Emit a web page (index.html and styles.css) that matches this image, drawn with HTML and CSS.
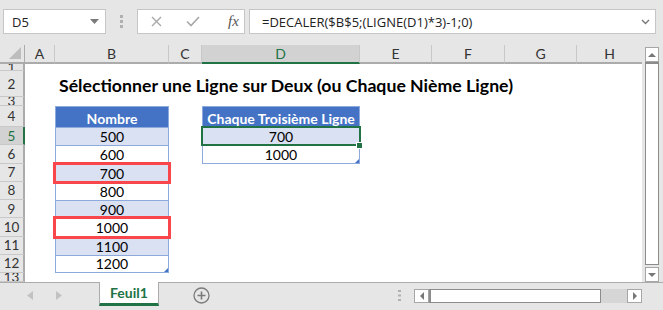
FILE: index.html
```html
<!DOCTYPE html>
<html lang="fr">
<head>
    <meta charset="UTF-8">
    <title>Feuil1 - Excel</title>
    <link rel="stylesheet" href="styles.css">
</head>
<body>
    <div class="formula-bar">
        <div class="name-box">
            <span>D5</span>
            <svg width="9" height="5" viewBox="0 0 9 5"><path d="M0 0h9L4.5 5z" fill="#7a7a7a"/></svg>
        </div>
        <div class="bar-dots">
            <svg width="3" height="13" viewBox="0 0 3 13"><rect x="0" y="0" width="3" height="3" fill="#b0b0b0"/><rect x="0" y="5" width="3" height="3" fill="#b0b0b0"/><rect x="0" y="10" width="3" height="3" fill="#b0b0b0"/></svg>
        </div>
        <div class="fx-box">
            <svg class="fx-icon" width="11" height="11" viewBox="0 0 11 11"><path d="M1 1l9 9M10 1l-9 9" stroke="#a8a8a8" stroke-width="1.4"/></svg>
            <svg class="fx-icon" width="14" height="11" viewBox="0 0 14 11"><path d="M1 5.5l4 4L13 1" stroke="#a8a8a8" stroke-width="1.6" fill="none"/></svg>
            <span class="fx">fx</span>
        </div>
        <div class="formula-input">
            <span>=DECALER($B$5;(LIGNE(D1)*3)-1;0)</span>
            <svg width="9" height="6" viewBox="0 0 9 6"><path d="M1 1l3.5 3.5L8 1" stroke="#777" stroke-width="1.4" fill="none"/></svg>
        </div>
    </div>

    <div class="sheet-area">
        <div class="sheet">
            <div class="ch corner">
                <svg width="12" height="12" viewBox="0 0 12 12"><path d="M12 0v12H0z" fill="#bdbdbd"/></svg>
            </div>
            <div class="ch">A</div>
            <div class="ch">B</div>
            <div class="ch">C</div>
            <div class="ch sel">D</div>
            <div class="ch">E</div>
            <div class="ch">F</div>
            <div class="ch">G</div>
            <div class="ch last">H</div>

            <div class="rh">1</div>
            <div class="rh">2</div>
            <div class="rh">3</div>
            <div class="rh">4</div>
            <div class="rh sel">5</div>
            <div class="rh">6</div>
            <div class="rh">7</div>
            <div class="rh">8</div>
            <div class="rh">9</div>
            <div class="rh">10</div>
            <div class="rh">11</div>
            <div class="rh">12</div>
            <div class="rh">13</div>

            <div class="title">Sélectionner une Ligne sur Deux (ou Chaque Nième Ligne)</div>

            <div class="cell head col-b row-4">Nombre</div>
            <div class="cell band col-b row-5">500</div>
            <div class="cell col-b row-6">600</div>
            <div class="cell band marked col-b row-7">700</div>
            <div class="cell col-b row-8">800</div>
            <div class="cell band col-b row-9">900</div>
            <div class="cell marked col-b row-10">1000</div>
            <div class="cell band col-b row-11">1100</div>
            <div class="cell table-end col-b row-12">1200</div>

            <div class="cell head col-d row-4">Chaque Troisième Ligne</div>
            <div class="cell band active col-d row-5">700</div>
            <div class="cell table-end col-d row-6">1000</div>
        </div>

        <div class="vscroll">
            <div class="sbtn"><svg width="8" height="4" viewBox="0 0 8 4"><path d="M0 4h8L4 0z" fill="#777"/></svg></div>
            <div class="vthumb"></div>
            <div class="sbtn"><svg width="8" height="4" viewBox="0 0 8 4"><path d="M0 0h8L4 4z" fill="#777"/></svg></div>
        </div>
    </div>

    <div class="tab-bar">
        <div class="tab-nav">
            <svg width="6" height="9" viewBox="0 0 6 9"><path d="M6 0v9L0 4.5z" fill="#c2c2c2"/></svg>
            <svg width="6" height="9" viewBox="0 0 6 9"><path d="M0 0v9l6-4.5z" fill="#c2c2c2"/></svg>
        </div>
        <div class="sheet-tab">Feuil1</div>
        <div class="add-sheet">
            <svg width="17" height="17" viewBox="0 0 17 17"><circle cx="8.5" cy="8.5" r="7.5" stroke="#7a7a7a" stroke-width="1.3" fill="none"/><path d="M8.5 4.5v8M4.5 8.5h8" stroke="#7a7a7a" stroke-width="1.6"/></svg>
        </div>
        <div class="tab-dots">
            <svg width="3" height="11" viewBox="0 0 3 11"><rect x="0" y="0" width="3" height="2" fill="#b0b0b0"/><rect x="0" y="4.5" width="3" height="2" fill="#b0b0b0"/><rect x="0" y="9" width="3" height="2" fill="#b0b0b0"/></svg>
        </div>
        <div class="hscroll">
            <div class="sbtn"><svg width="4" height="8" viewBox="0 0 4 8"><path d="M4 0v8L0 4z" fill="#777"/></svg></div>
            <div class="hthumb"></div>
            <div class="htrack"></div>
            <div class="sbtn"><svg width="4" height="8" viewBox="0 0 4 8"><path d="M0 0v8l4-4z" fill="#777"/></svg></div>
        </div>
    </div>
</body>
</html>
```

FILE: styles.css
```css
body {
    margin: 0;
    width: 663px;
    height: 310px;
    overflow: hidden;
    background-color: #e6e6e6;
    font-family: Lato, "Open Sans", sans-serif;
    color: #000;
}

/* formula bar */

.formula-bar {
    height: 38px;
    box-sizing: border-box;
    padding: 9px 0 0 3px;
    display: flex;
    align-items: flex-start;
}

.name-box {
    width: 103px;
    height: 25px;
    box-sizing: border-box;
    background-color: #fff;
    border: 1px solid #c6c6c6;
    display: flex;
    align-items: center;
    justify-content: space-between;
    padding: 0 6px 0 8px;
    font-family: "Open Sans", sans-serif;
    font-size: 13px;
    color: #222;
}

.bar-dots {
    width: 31px;
    height: 25px;
    display: flex;
    align-items: center;
    justify-content: center;
}

.fx-box {
    width: 108px;
    height: 25px;
    box-sizing: border-box;
    background-color: #fff;
    border: 1px solid #c6c6c6;
    display: flex;
    align-items: center;
    padding-left: 13px;
}

.fx-icon {
    margin-right: 24px;
}

.fx {
    margin-left: 4px;
    font-family: "Liberation Serif", serif;
    font-style: italic;
    font-size: 15px;
    color: #555;
}

.formula-input {
    width: 407px;
    height: 25px;
    margin-left: 4px;
    box-sizing: border-box;
    background-color: #fff;
    border: 1px solid #c6c6c6;
    display: flex;
    align-items: center;
    justify-content: space-between;
    padding: 0 5px 0 12px;
    font-family: "Open Sans", sans-serif;
    font-size: 13px;
    color: #222;
}

/* sheet */

.sheet-area {
    height: 244px;
    box-sizing: border-box;
    padding-top: 7px;
    display: flex;
    align-items: flex-start;
}

.sheet {
    width: 642px;
    height: 237px;
    overflow: hidden;
    background-color: #fff;
    display: grid;
    grid-template-columns: 25px 30px 114px 33px 158px 72px 73px 72px 65px;
    grid-template-rows: 19px 7px 26px 9px 21px repeat(8, 18.25px) 9px;
    font-size: 14px;
}

.ch {
    grid-row: 1;
    box-sizing: border-box;
    background-color: #e6e6e6;
    border-right: 1px solid #c8c8c8;
    border-bottom: 2px solid #ababab;
    display: flex;
    align-items: center;
    justify-content: center;
    color: #333;
    font-size: 14px;
}

.ch.corner {
    justify-content: flex-end;
    align-items: flex-end;
    padding: 0 3px 3px 0;
    border-right: 1px solid #ababab;
}

.ch.last {
    border-right: none;
}

.ch.sel {
    background-color: #d2d2d2;
    border-bottom-color: #217346;
    color: #217346;
}

.rh {
    grid-column: 1;
    box-sizing: border-box;
    background-color: #e6e6e6;
    border-right: 2px solid #ababab;
    border-bottom: 1px solid #c8c8c8;
    overflow: hidden;
    display: flex;
    align-items: center;
    justify-content: center;
    line-height: 18px;
    color: #333;
    font-size: 13.5px;
}

.rh:last-child {
    align-items: flex-start;
}

.rh.sel {
    background-color: #d2d2d2;
    border-right-color: #217346;
    color: #217346;
}

.title {
    grid-column: 3 / 10;
    grid-row: 3;
    padding: 3px 0 0 4px;
    display: flex;
    align-items: center;
    font-weight: bold;
    font-size: 17.7px;
    white-space: nowrap;
}

.col-b { grid-column: 3; }
.col-d { grid-column: 5; }
.row-4 { grid-row: 5; }
.row-5 { grid-row: 6; }
.row-6 { grid-row: 7; }
.row-7 { grid-row: 8; }
.row-8 { grid-row: 9; }
.row-9 { grid-row: 10; }
.row-10 { grid-row: 11; }
.row-11 { grid-row: 12; }
.row-12 { grid-row: 13; }

.cell {
    position: relative;
    box-sizing: border-box;
    border-left: 1px solid #8ea9db;
    border-right: 1px solid #8ea9db;
    border-top: 1px solid #8ea9db;
    display: flex;
    align-items: center;
    justify-content: center;
    white-space: nowrap;
}

.cell.head {
    background-color: #4472c4;
    border-color: #8ea9db;
    color: #fff;
    font-weight: bold;
    padding-top: 3px;
}

.cell.band {
    background-color: #d9e1f2;
}

.cell.table-end {
    border-bottom: 1px solid #8ea9db;
}

.cell.table-end::after {
    content: "";
    position: absolute;
    right: 0;
    bottom: 0;
    border-style: solid;
    border-width: 0 0 4px 4px;
    border-color: transparent transparent #4472c4 transparent;
}

.cell.marked {
    z-index: 1;
    outline: 3px solid #f9464b;
    outline-offset: -1px;
}

.cell.active {
    z-index: 1;
    outline: 2px solid #217346;
    outline-offset: -1px;
}

.cell.active::after {
    content: "";
    position: absolute;
    right: -4px;
    bottom: -4px;
    width: 5px;
    height: 5px;
    background-color: #217346;
    border: 1px solid #fff;
}

/* scroll bars */

.sbtn {
    box-sizing: border-box;
    background-color: #fff;
    border: 1px solid #a6a6a6;
    display: flex;
    align-items: center;
    justify-content: center;
}

.vscroll {
    margin: 2px 0 0 3px;
    width: 14px;
    height: 235px;
    display: flex;
    flex-direction: column;
}

.vscroll .sbtn {
    height: 15px;
}

.vthumb {
    flex: 1;
    box-sizing: border-box;
    background-color: #fff;
    border: 1px solid #8c8c8c;
    border-top-width: 2px;
    margin: 0 0 2px;
}

.tab-bar {
    height: 28px;
    box-sizing: border-box;
    border-top: 1px solid #ababab;
    display: flex;
    align-items: flex-start;
}

.tab-nav {
    width: 99px;
    height: 24px;
    display: flex;
    align-items: center;
    padding-left: 27px;
    box-sizing: border-box;
    gap: 23px;
}

.sheet-tab {
    width: 60px;
    height: 24px;
    margin-top: -1px;
    box-sizing: border-box;
    background-color: #fff;
    border-left: 1px solid #ababab;
    border-right: 1px solid #ababab;
    border-bottom: 3px solid #217346;
    display: flex;
    align-items: center;
    justify-content: center;
    color: #217346;
    font-weight: bold;
    font-size: 14px;
}

.add-sheet {
    margin: 4px 0 0 34px;
    height: 17px;
}

.tab-dots {
    margin: 7px 13px 0 auto;
    height: 11px;
    display: flex;
}

.hscroll {
    width: 228px;
    height: 14px;
    margin: 6px 21px 0 0;
    display: flex;
}

.hscroll .sbtn {
    width: 15px;
}

.hthumb {
    width: 172px;
    box-sizing: border-box;
    background-color: #fff;
    border: 1px solid #8c8c8c;
    border-left-width: 2px;
}

.htrack {
    width: 26px;
    background-color: #d6d6d6;
}
```
